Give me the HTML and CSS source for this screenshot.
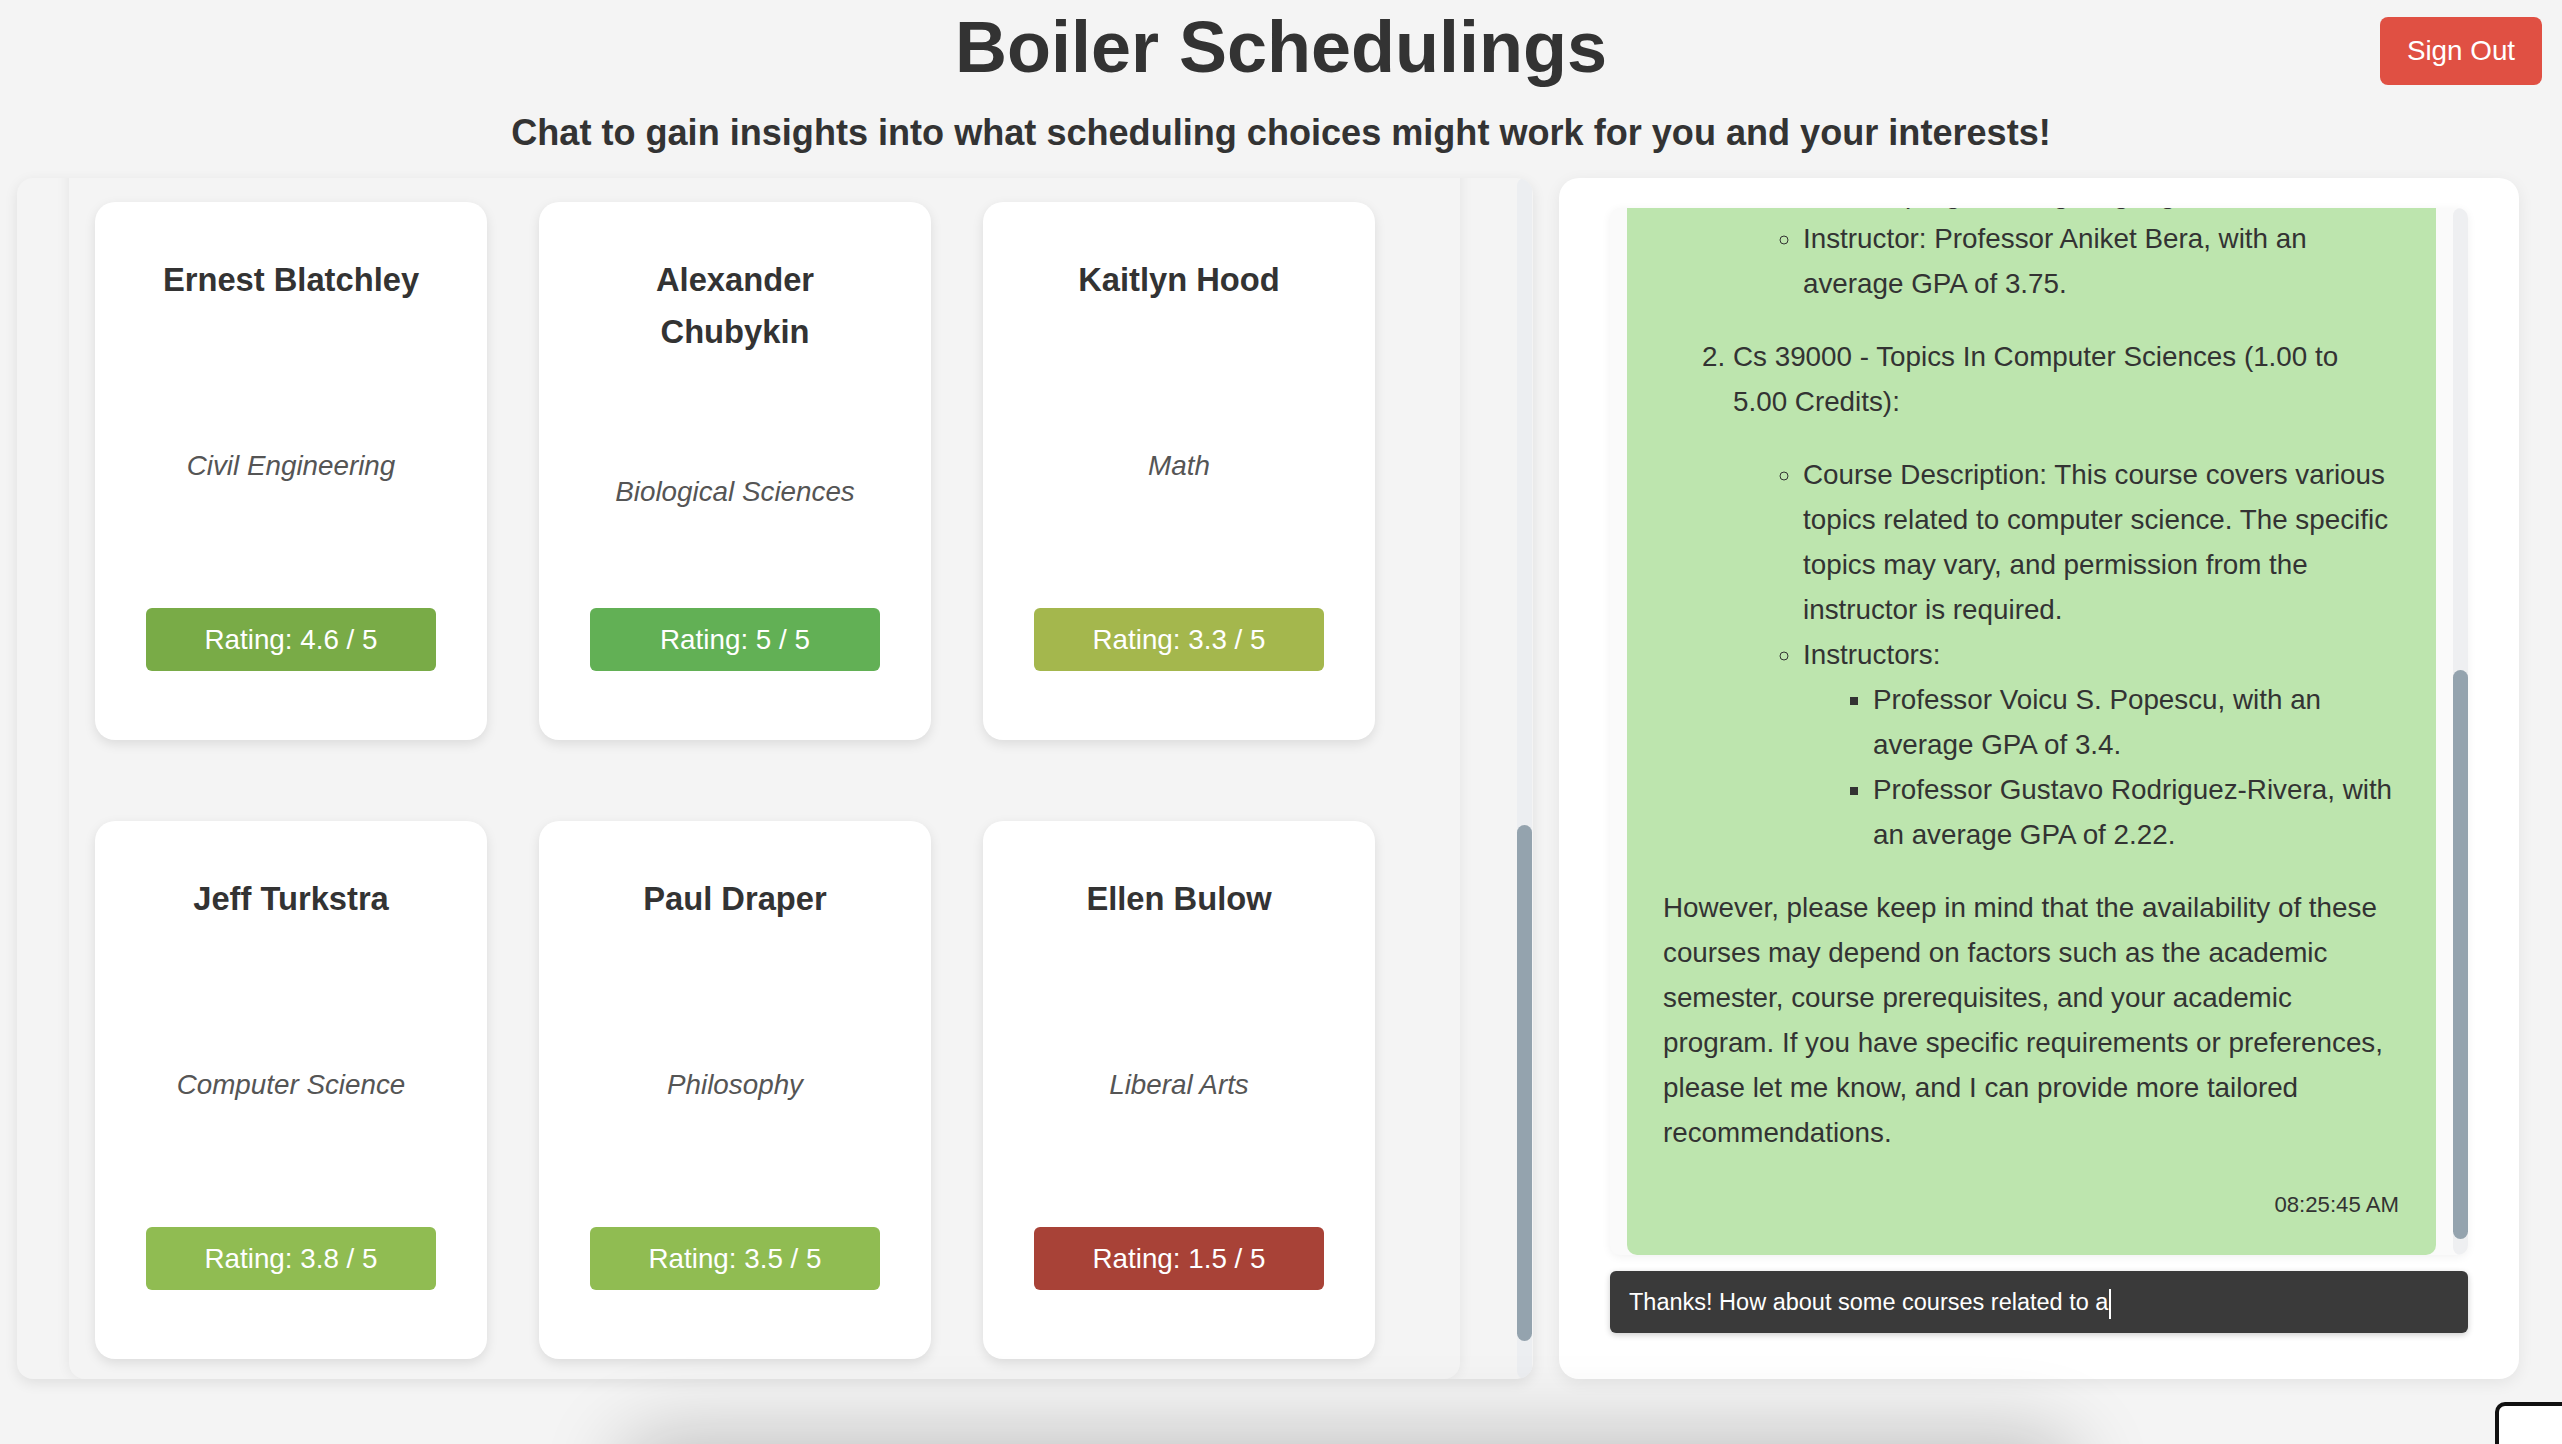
FILE: index.html
```html
<!DOCTYPE html>
<html lang="en">
<head>
<meta charset="utf-8">
<title>Boiler Schedulings</title>
<link rel="stylesheet" href="styles.css">
</head>
<body>
<header class="page-header">
  <h1 class="title">Boiler Schedulings</h1>
  <p class="subtitle">Chat to gain insights into what scheduling choices might work for you and your interests!</p>
  <button class="sign-out" type="button">Sign Out</button>
</header>

<main class="layout">
  <section class="prof-panel">
    <div class="prof-viewport">
      <div class="prof-list">
        <div class="list-spacer"></div>
        <div class="card-grid">
          <article class="prof-card">
            <h3 class="prof-name">Ernest Blatchley</h3>
            <p class="prof-major">Civil Engineering</p>
            <div class="rating" style="background:#79ab47">Rating: 4.6 / 5</div>
          </article>
          <article class="prof-card">
            <h3 class="prof-name">Alexander Chubykin</h3>
            <p class="prof-major">Biological Sciences</p>
            <div class="rating" style="background:#62b055">Rating: 5 / 5</div>
          </article>
          <article class="prof-card">
            <h3 class="prof-name">Kaitlyn Hood</h3>
            <p class="prof-major">Math</p>
            <div class="rating" style="background:#a4b74d">Rating: 3.3 / 5</div>
          </article>
          <article class="prof-card">
            <h3 class="prof-name">Jeff Turkstra</h3>
            <p class="prof-major">Computer Science</p>
            <div class="rating" style="background:#90bc52">Rating: 3.8 / 5</div>
          </article>
          <article class="prof-card">
            <h3 class="prof-name">Paul Draper</h3>
            <p class="prof-major">Philosophy</p>
            <div class="rating" style="background:#90bc52">Rating: 3.5 / 5</div>
          </article>
          <article class="prof-card">
            <h3 class="prof-name">Ellen Bulow</h3>
            <p class="prof-major">Liberal Arts</p>
            <div class="rating" style="background:#a84237">Rating: 1.5 / 5</div>
          </article>
        </div>
      </div>
    </div>
    <div class="scrollbar scrollbar-list"><div class="thumb"></div></div>
  </section>

  <section class="chat-panel">
    <div class="messages">
      <div class="messages-viewport">
        <div class="messages-inner">
          <div class="msg msg-user">
            <p>What are some computer science courses I could take next semester?</p>
            <div class="msg-time">08:25:30 AM</div>
          </div>
          <div class="msg msg-bot">
            <p>Here are a couple of computer science courses that you might be interested in:</p>
            <ol>
              <li>
                <p>Cs 35200 - Compilers: Principles And Practice (3.00 Credits):</p>
                <ul>
                  <li>Course Description: This course covers the theory and practice of building compilers, including lexical analysis, parsing, semantic analysis, code generation and optimization for modern programming languages.</li>
                  <li>Instructor: Professor Aniket Bera, with an average GPA of 3.75.</li>
                </ul>
              </li>
              <li>
                <p>Cs 39000 - Topics In Computer Sciences (1.00 to 5.00 Credits):</p>
                <ul>
                  <li>Course Description: This course covers various topics related to computer science. The specific topics may vary, and permission from the instructor is required.</li>
                  <li>Instructors:
                    <ul>
                      <li>Professor Voicu S. Popescu, with an average GPA of 3.4.</li>
                      <li>Professor Gustavo Rodriguez-Rivera, with an average GPA of 2.22.</li>
                    </ul>
                  </li>
                </ul>
              </li>
            </ol>
            <p>However, please keep in mind that the availability of these courses may depend on factors such as the academic semester, course prerequisites, and your academic program. If you have specific requirements or preferences, please let me know, and I can provide more tailored recommendations.</p>
            <div class="msg-time">08:25:45 AM</div>
          </div>
        </div>
      </div>
      <div class="scrollbar scrollbar-chat"><div class="thumb"></div></div>
    </div>
    <div class="chat-input">Thanks! How about some courses related to a<span class="caret"></span></div>
  </section>
</main>

<div class="dock-shadow"></div>
<div class="corner-widget"></div>
</body>
</html>
```

FILE: styles.css
```css
html, body {
  margin: 0;
  padding: 0;
}

body {
  background: #f4f4f4;
  font-family: "Liberation Sans", Arial, Helvetica, sans-serif;
  color: #333;
  height: 1444px;
  overflow: hidden;
  position: relative;
}

/* Header */
.page-header {
  position: relative;
  text-align: center;
  padding-top: 11px;
}

.title {
  margin: 0;
  font-size: 72px;
  line-height: 72px;
  font-weight: 700;
  color: #333;
}

.subtitle {
  margin: 32px 0 0;
  font-size: 36.1px;
  line-height: 36px;
  font-weight: 700;
  color: #333;
}

.sign-out {
  position: absolute;
  top: 17px;
  right: 20px;
  width: 162px;
  height: 68px;
  padding: 0;
  border: 0;
  border-radius: 8px;
  background: #e05043;
  color: #fff;
  font-family: "Liberation Sans", Arial, sans-serif;
  font-size: 27.8px;
}

/* Main layout */
.layout {
  display: grid;
  grid-template-columns: 1516px 960px;
  grid-template-rows: 1201px;
  column-gap: 26px;
  padding-left: 17px;
  margin-top: 27px;
  height: 1201px;
}

/* Shared scrollbar look */
.scrollbar {
  flex: none;
  width: 15px;
  display: flex;
  flex-direction: column;
  justify-content: flex-end;
  background: #eceef1;
  border-radius: 8px;
}

.thumb {
  width: 15px;
  border-radius: 8px;
  background: #94a3ae;
}

.scrollbar-list .thumb {
  height: 516px;
  margin-bottom: 38px;
}

.scrollbar-chat {
  background: #eeeff1;
}

.scrollbar-chat .thumb {
  height: 569px;
  margin-bottom: 16px;
}

/* Professors panel */
.prof-panel {
  min-height: 0;
  height: 1201px;
  display: flex;
  overflow: hidden;
  padding-right: 1px;
  box-sizing: border-box;
  background: #f4f4f4;
  border-radius: 16px;
  box-shadow: 0 4px 14px rgba(0, 0, 0, 0.09);
}

.prof-viewport {
  flex: 1;
  min-width: 0;
  display: flex;
  flex-direction: column;
  justify-content: flex-end;
  overflow: hidden;
}

.prof-list {
  flex: none;
  width: 1391px;
  margin-left: 52px;
  box-sizing: border-box;
  padding: 0 0 20px 26px;
  background: #f4f4f4;
  border-radius: 16px;
  box-shadow: 0 0 14px rgba(0, 0, 0, 0.07);
}

.list-spacer {
  height: 400px;
}

.card-grid {
  display: grid;
  grid-template-columns: repeat(3, 392px);
  column-gap: 52px;
  row-gap: 81px;
}

.prof-card {
  box-sizing: border-box;
  height: 538px;
  padding: 52px 50px 69px;
  display: flex;
  flex-direction: column;
  align-items: center;
  justify-content: space-between;
  text-align: center;
  background: #fff;
  border-radius: 20px;
  box-shadow: 0 4px 12px rgba(0, 0, 0, 0.1);
}

.prof-name {
  margin: 0;
  font-size: 32.7px;
  line-height: 52px;
  font-weight: 700;
  color: #333;
}

.prof-major {
  margin: 16px 0 0;
  font-size: 27.8px;
  line-height: 45px;
  font-style: italic;
  color: #555;
}

.rating {
  width: 290px;
  height: 63px;
  line-height: 63px;
  border-radius: 6px;
  color: #fff;
  font-size: 27.8px;
  text-align: center;
}

/* Chat panel */
.chat-panel {
  min-height: 0;
  height: 1201px;
  display: flex;
  flex-direction: column;
  gap: 16px;
  box-sizing: border-box;
  padding: 30px 51px 46px;
  background: #fff;
  border-radius: 20px;
  box-shadow: 0 4px 16px rgba(0, 0, 0, 0.07);
}

.messages {
  flex: 1 1 0;
  min-height: 0;
  display: flex;
  overflow: hidden;
  background: #fafafa;
  border-radius: 10px;
  box-shadow: 0 2px 10px rgba(0, 0, 0, 0.06);
}

.messages-viewport {
  flex: 1;
  min-width: 0;
  display: flex;
  flex-direction: column;
  justify-content: flex-end;
  overflow: hidden;
  padding: 0 17px;
}

.messages-inner {
  flex: none;
  display: flex;
  flex-direction: column;
  gap: 17px;
  padding-top: 17px;
}

.msg {
  border-radius: 10px;
  font-size: 27.8px;
  line-height: 45px;
  color: #333;
}

.msg-user {
  align-self: flex-end;
  max-width: 600px;
  padding: 24px 30px;
  background: #e6e6e6;
}

.msg-user p {
  margin: 0;
}

.msg-bot {
  padding: 36px 37px 33px 36px;
  background: #bde5ae;
}

.msg-bot > p {
  margin: 28px 0;
}

.msg-bot > p:first-child {
  margin-top: 0;
}

.msg-bot ol {
  margin: 0;
  padding-left: 70px;
}

.msg-bot ol > li > p {
  margin: 28px 0;
}

.msg-bot ul {
  margin: 0;
  padding-left: 70px;
}

.msg-time {
  margin-top: 32px;
  font-size: 22.2px;
  line-height: 35px;
  text-align: right;
  color: #333;
}

.msg-user .msg-time {
  margin-top: 8px;
}

.chat-input {
  flex: none;
  height: 62px;
  line-height: 62px;
  box-sizing: border-box;
  padding: 0 19px;
  background: #3a3a3a;
  border-radius: 6px;
  color: #fff;
  font-size: 23.5px;
  box-shadow: 0 2px 6px rgba(0, 0, 0, 0.2);
  white-space: nowrap;
}

.caret {
  display: inline-block;
  width: 2px;
  height: 30px;
  margin-left: 1px;
  background: #fff;
  vertical-align: middle;
}

/* Decorative overlays at the bottom edge */
.dock-shadow {
  position: fixed;
  left: 620px;
  top: 1456px;
  width: 1455px;
  height: 100px;
  border-radius: 40px;
  background: #888;
  box-shadow: 0 -20px 80px rgba(0, 0, 0, 0.22);
}

.corner-widget {
  position: fixed;
  right: 0;
  bottom: 0;
  width: 63px;
  height: 38px;
  background: #fff;
  border-top: 4px solid #111;
  border-left: 4px solid #111;
  border-top-left-radius: 10px;
}
```
